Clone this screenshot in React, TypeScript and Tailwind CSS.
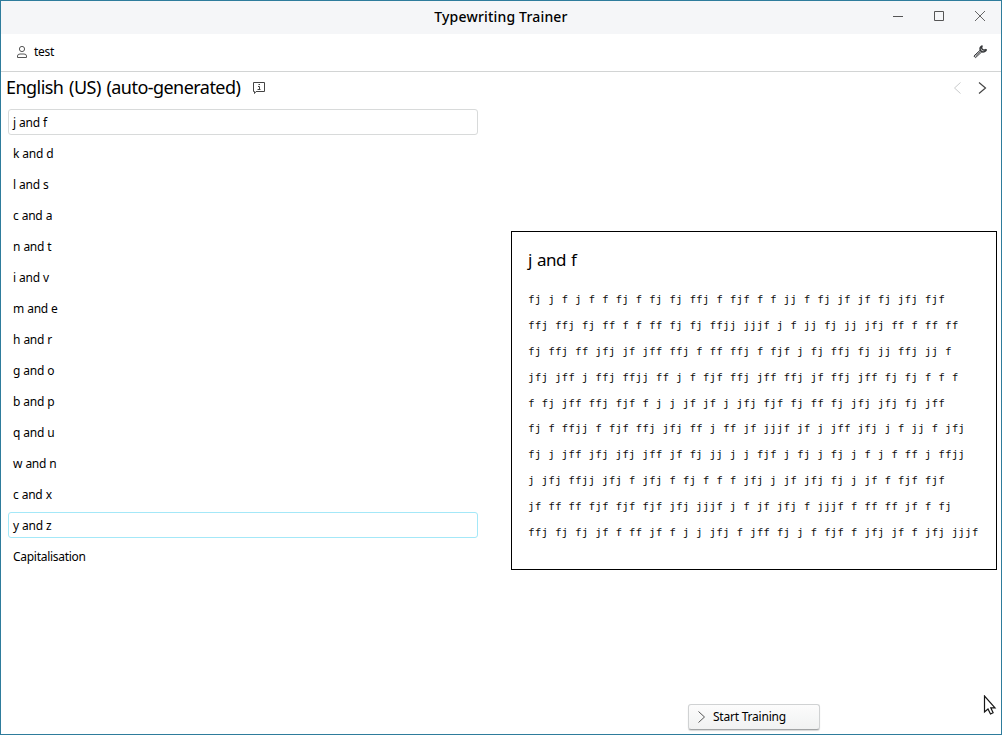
import React from "react";

const lessons = [
  "j and f", "k and d", "l and s", "c and a", "n and t", "i and v", "m and e", "h and r",
  "g and o", "b and p", "q and u", "w and n", "c and x", "y and z", "Capitalisation",
];

const lines = [
  "fj j f j f f fj f fj fj ffj f fjf f f jj f fj jf jf fj jfj fjf",
  "ffj ffj fj ff f f ff fj fj ffjj jjjf j f jj fj jj jfj ff f ff ff",
  "fj ffj ff jfj jf jff ffj f ff ffj f fjf j fj ffj fj jj ffj jj f",
  "jfj jff j ffj ffjj ff j f fjf ffj jff ffj jf ffj jff fj fj f f f",
  "f fj jff ffj fjf f j j jf jf j jfj fjf fj ff fj jfj jfj fj jff",
  "fj f ffjj f fjf ffj jfj ff j ff jf jjjf jf j jff jfj j f jj f jfj",
  "fj j jff jfj jfj jff jf fj jj j j fjf j fj j fj j f j f ff j ffjj",
  "j jfj ffjj jfj f jfj f fj f f f jfj j jf jfj fj j jf f fjf fjf",
  "jf ff ff fjf fjf fjf jfj jjjf j f jf jfj f jjjf f ff ff jf f fj",
  "ffj fj fj jf f ff jf f j j jfj f jff fj j f fjf f jfj jf f jfj jjjf",
];

function rowBorder(i: number) {
  if (i === 0) return "border-[#d8dada]";
  if (i === 13) return "border-[#a4e8f8]";
  return "border-transparent";
}

export default function App() {
  return (
    <div className="relative flex h-[735px] w-[1002px] flex-col overflow-hidden border border-[#2e7c9c] bg-white font-['Noto_Sans',sans-serif] text-[12px] text-black">
      <header className="flex h-[33px] shrink-0 items-center bg-[#f5f6f8]">
        <div className="w-[120px]" />
        <h1 className="flex-1 pb-[2px] text-center text-[14px] font-medium leading-[31px] tracking-[0.18px]">Typewriting Trainer</h1>
        <div className="flex w-[120px] gap-[29px] pb-[4px] pl-[11px] text-[#555]">
          <svg width="12" height="12" viewBox="0 0 12 12" fill="none" stroke="currentColor"><path d="M1 6.500h10" /></svg>
          <svg width="12" height="12" viewBox="0 0 12 12" fill="none" stroke="currentColor"><path d="M1.500 1.500h9v9h-9z" /></svg>
          <svg width="12" height="12" viewBox="0 0 12 12" fill="none" stroke="currentColor" strokeWidth=".9"><path d="M1 1l10 10M11 1L1 11" /></svg>
        </div>
      </header>

      <div className="flex h-[38px] shrink-0 items-center border-b border-[#d2d4d4] pb-[2px] pl-[15px] pr-[14px]">
        <svg width="12" height="14" viewBox="0 0 12 14" fill="none" stroke="#565656"><circle cx="6" cy="4" r="2.600" /><path d="M1.500 12.500V11q0-2 2.500-2h4q2.500 0 2.500 2v1.500z" /></svg>
        <span className="ml-[6px] tracking-[-0.3px]">test</span>
        <svg className="ml-auto" width="14" height="14" viewBox="0 0 14 14" fill="none" stroke="#35373a"><path d="M7 5.300L.900 11l1.600 1.700L8.800 6.800M2.400 11.100l5-4.700" /><path d="M9.500.700C7.300 1.400 6.500 3.400 7.500 5.400s3.700 2.100 5.500 0l.3-1.300M9.300.900C8.200 2.300 8.500 4 10 4.700c1.300.5 2.300.300 3.300-.400" strokeWidth="1.500" /></svg>
      </div>

      <div className="flex h-[33px] shrink-0 items-center pb-[2px] pl-[5px] pr-[12px]">
        <h2 className="text-[18px] leading-[29px] tracking-[-0.54px] [word-spacing:1.5px]">English (US) (auto-generated)</h2>
        <svg className="ml-[12px] mt-[1px]" width="14" height="14" viewBox="0 0 14 14" fill="none" stroke="#444"><path d="M1.500 1.500h11v9h-8.500l-1.500 2v-2h-1z" /><path d="M6 5.500h1.500v3M5.500 8.500h3" /><path d="M6.500 3.500h1.500" /></svg>
        <div className="ml-auto mt-[1px] flex gap-[11px]">
          <svg width="14" height="14" viewBox="0 0 14 14" fill="none" stroke="#c9cbcc"><path d="M10.500 1.500L4.500 7l6 5.500" /></svg>
          <svg width="14" height="14" viewBox="0 0 14 14" fill="none" stroke="#444" strokeWidth="1.200"><path d="M4 1.500L10.500 7 4 12.500" /></svg>
        </div>
      </div>

      <main className="flex min-h-0 flex-1">
        <ul className="flex w-[477px] flex-col gap-[5px] pl-[7px] pt-[4px]">
          {lessons.map((name, i) => (
            <li key={name} className={"h-[26px] shrink-0 rounded-[3px] border pl-[4px] leading-[25px] tracking-[-0.28px] [word-spacing:0.4px] " + rowBorder(i)}>{name}</li>
          ))}
        </ul>
        <section className="flex flex-1 flex-col pl-[33px] pr-[4px] pt-[126px]">
          <article className="h-[339px] shrink-0 border border-black pl-[16px] pt-[16px]">
            <h3 className="h-[24px] text-[17px] leading-[24px] tracking-[-0.45px] [word-spacing:1px]">j and f</h3>
            <div className="mt-[15.200px] font-['DejaVu_Sans_Mono',monospace] text-[11px] tracking-[0.102px] text-[#101010]">
              {lines.map((line) => (
                <p key={line} className="h-[25.87px] whitespace-pre leading-[25.87px]">{line}</p>
              ))}
            </div>
          </article>
          <button className="ml-[177px] mt-[134px] flex h-[26px] w-[132px] shrink-0 items-center rounded-[3px] border border-[#d0d2d3] border-b-[#a2a4a5] bg-linear-to-b from-[#fcfcfc] to-[#f1f2f2] pb-[1px] pl-[6px] shadow-[0_1px_1px_#d8d8d8]">
            <svg width="14" height="14" viewBox="0 0 14 14" fill="none" stroke="#555"><path d="M3.500 1.500L9.500 7l-6 5.500" /></svg>
            <span className="ml-[4px] tracking-[-0.22px]">Start Training</span>
          </button>
        </section>
      </main>

      <svg className="absolute left-[982px] top-[694px]" width="14" height="22" viewBox="0 0 14 22" fill="white" stroke="#161616" strokeWidth="1.200"><path d="M1.500 1v16l3.500-3 2.500 5 2.600-1.200-2.300-5H12z" /></svg>
    </div>
  );
}
